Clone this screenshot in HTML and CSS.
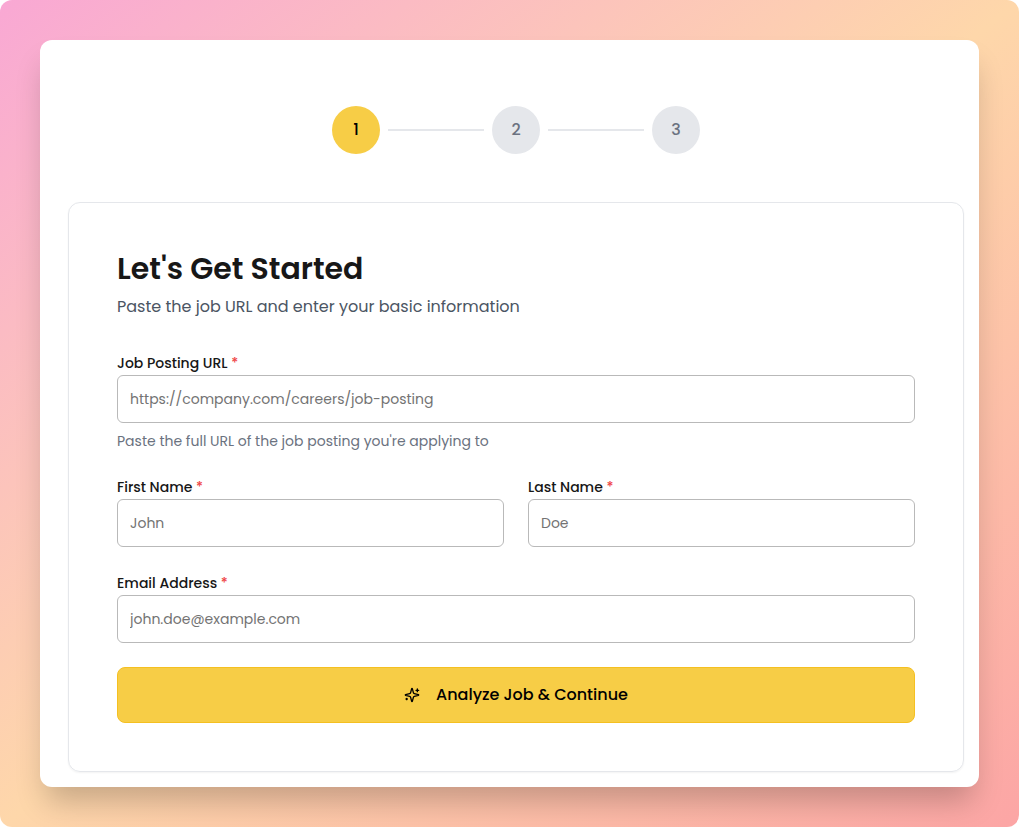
FILE: index.html
```html
<!DOCTYPE html>
<html lang="en">
  <head>
    <meta charset="UTF-8" />
    <meta name="viewport" content="width=device-width, initial-scale=1.0" />
    <title>Let's Get Started</title>
    <link rel="stylesheet" href="styles.css">
  </head>
  <body>
    <div class="backdrop">
      <main class="window">
        <ol class="steps">
          <li class="step active" aria-current="step">1</li>
          <li class="line" aria-hidden="true"></li>
          <li class="step">2</li>
          <li class="line" aria-hidden="true"></li>
          <li class="step">3</li>
        </ol>
        <section class="card">
          <h1>Let's Get Started</h1>
          <p class="subtitle">Paste the job URL and enter your basic information</p>
          <form class="form">
            <div class="field">
              <label for="job-url">Job Posting URL <span class="required">*</span></label>
              <input type="url" id="job-url" placeholder="https://company.com/careers/job-posting" required />
              <p class="hint">Paste the full URL of the job posting you're applying to</p>
            </div>
            <div class="row">
              <div class="field">
                <label for="first-name">First Name <span class="required">*</span></label>
                <input type="text" id="first-name" placeholder="John" required />
              </div>
              <div class="field">
                <label for="last-name">Last Name <span class="required">*</span></label>
                <input type="text" id="last-name" placeholder="Doe" required />
              </div>
            </div>
            <div class="field">
              <label for="email">Email Address <span class="required">*</span></label>
              <input type="email" id="email" placeholder="john.doe@example.com" required />
            </div>
            <button type="submit" class="submit">
              <svg class="sparkles" viewBox="0 0 24 24" aria-hidden="true">
                <path d="M9.937 15.5A2 2 0 0 0 8.5 14.063l-6.135-1.582a.5.5 0 0 1 0-.962L8.5 9.936A2 2 0 0 0 9.937 8.5l1.582-6.135a.5.5 0 0 1 .963 0L14.063 8.5A2 2 0 0 0 15.5 9.937l6.135 1.581a.5.5 0 0 1 0 .964L15.5 14.063a2 2 0 0 0-1.437 1.437l-1.582 6.135a.5.5 0 0 1-.963 0z" />
                <path d="M20 3v4M22 5h-4M4 17v2M5 18H3" />
              </svg>
              Analyze Job &amp; Continue
            </button>
          </form>
        </section>
      </main>
    </div>
  </body>
</html>
```
FILE: styles.css
```css
* {
  box-sizing: border-box;
}
body {
  margin: 0;
  background-color: white;
  color: #171717;
  font-family: Poppins, Inter, sans-serif;
  font-size: 16px;
  line-height: 24px;
}
h1,
p,
ol {
  margin: 0;
  padding: 0;
}
.backdrop {
  min-height: 100vh;
  padding: 40px;
  border-radius: 12px;
  background-image: linear-gradient(to bottom right, #f9a8d4, #fed7aa, #fca5a5);
}
.window {
  padding: 66px 15px 15px 28px;
  border-radius: 12px;
  background-color: white;
  box-shadow: 0 20px 30px -6px rgba(0, 0, 0, 0.22);
}

/* progress */
.steps {
  display: flex;
  justify-content: center;
  align-items: center;
  gap: 8px;
  margin-bottom: 48px;
  list-style: none;
}
.step {
  display: flex;
  justify-content: center;
  align-items: center;
  width: 48px;
  height: 48px;
  border-radius: 50%;
  background-color: #e5e7eb;
  color: #6b7280;
  font-weight: 500;
}
.step.active {
  background-color: #f7cd46;
  color: black;
}
.line {
  width: 96px;
  height: 2px;
  background-color: #e5e7eb;
}

.card {
  max-width: 896px;
  margin: 0 auto;
  padding: 48px;
  border: 1px solid #e5e7eb;
  border-radius: 12px;
  box-shadow: 0 1px 2px rgba(0, 0, 0, 0.05);
}
h1 {
  font-size: 30px;
  font-weight: 600;
  line-height: 36px;
}
.subtitle {
  margin-top: 8px;
  color: #4b5563;
}

/* form */
.form {
  display: grid;
  gap: 24px;
  margin-top: 32px;
}
.row {
  display: grid;
  grid-template-columns: 1fr 1fr;
  gap: 24px;
}
.field label {
  display: block;
  font-size: 14px;
  font-weight: 500;
}
.required {
  color: #ef4444;
}
.field input {
  display: block;
  width: 100%;
  height: 48px;
  padding: 0 12px;
  border: 1px solid #b9b9b9;
  border-radius: 6px;
  background-color: white;
  color: #171717;
  font-family: inherit;
  font-size: 14px;
}
.field input::placeholder {
  color: #737373;
}
.hint {
  margin-top: 8px;
  color: #6b7280;
  font-size: 14px;
  line-height: 20px;
}
.submit {
  display: flex;
  justify-content: center;
  align-items: center;
  gap: 16px;
  height: 56px;
  border: 1px solid #f5c021;
  border-radius: 8px;
  background-color: #f7cd46;
  color: black;
  font-family: inherit;
  font-size: 16px;
  font-weight: 500;
  line-height: 24px;
}
.sparkles {
  width: 16px;
  height: 16px;
  fill: none;
  stroke: currentColor;
  stroke-width: 2;
  stroke-linecap: round;
  stroke-linejoin: round;
}
```
